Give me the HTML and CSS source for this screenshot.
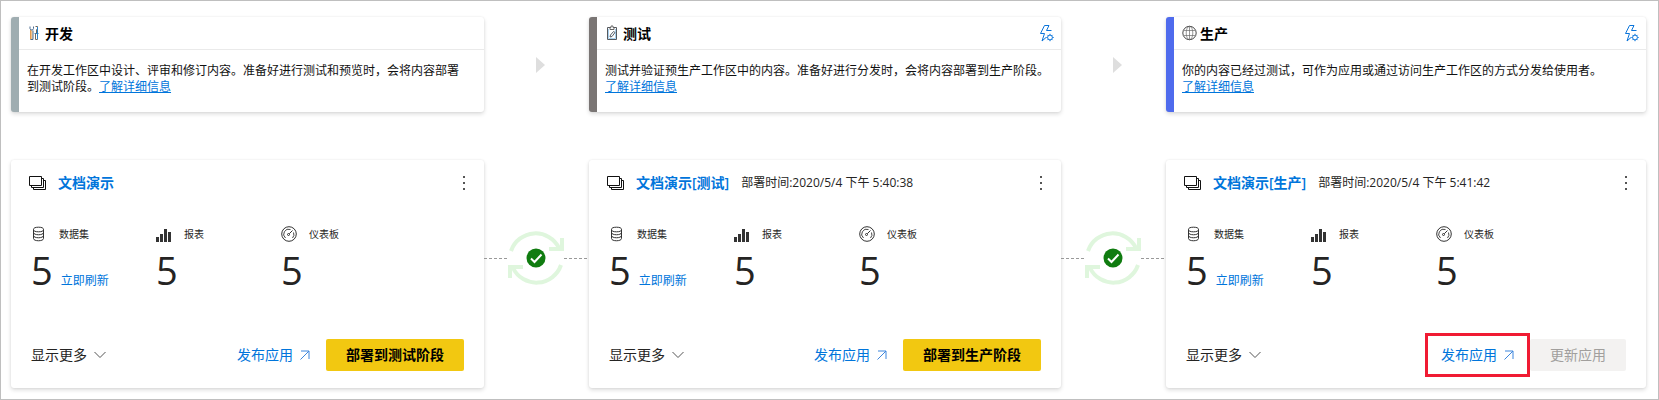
FILE: index.html
```html
<!DOCTYPE html>
<html lang="zh-CN">
<head>
<meta charset="utf-8">
<title>部署管道</title>
<link rel="stylesheet" href="styles.css">
</head>
<body>
<svg class="sprite" aria-hidden="true">
  <symbol id="i-tools" viewBox="0 0 16 16" fill="none">
    <path d="M4.500 5.500V14H6.500V5.500Z" fill="#f2c48f"/>
    <path d="M4.500 5V14.500" stroke="#e39a4e"/>
    <path d="M4 1.500V3.500L5 5H6.500L7.500 3.500V1.500M7 5.500V14.500H4.500" stroke="#4a6a8f"/>
    <path d="M9.500 1.500H11.500V3.500L10.500 5V8" stroke="#6d6357"/>
    <path d="M8.500 8.500H12.500M11.500 2V14.500" stroke="#2b7fc4"/><path d="M9.500 8.500V14.500H11.500" stroke="#77695c"/>
  </symbol>
  <symbol id="i-clip" viewBox="0 0 16 16" fill="none">
    <path d="M6 2.500H3.500V14.500H12.500V2.500H10" stroke="#55595e"/>
    <path d="M4.500 4V13.500H11.500V4" stroke="#a9d0ee"/>
    <path d="M6 4.500V2.500H7V1H9V2.500H10V4.500Z" stroke="#666"/>
    <path d="M6 12L6.500 10L9.500 6.500L11 7.500L8 11.500Z" stroke="#56606b"/>
  </symbol>
  <symbol id="i-globe" viewBox="0 0 16 16" fill="none" stroke="#484848">
    <circle cx="8.500" cy="8" r="6.700"/><g stroke-width=".7" stroke="#6a6a6a"><ellipse cx="8.500" cy="8" rx="3.300" ry="6.700"/><path d="M8.500 1.500V14.500M2.800 5.500H14.200M2.800 10.500H14.200"/></g>
  </symbol>
  <symbol id="i-rule" viewBox="0 0 16 18" fill="none" stroke="#0a74da">
    <path d="M5.500 9.500H1.500L5.500 1.500H10L7.500 6.500H12.500M5.500 9.500L3 17L7 13.500"/>
    <circle cx="11" cy="13.500" r="2.400"/><path d="M11 9.800V11M11 16V17.200M7.300 13.500H8.500M13.500 13.500H14.700M8.400 10.900L9.300 11.800M12.700 15.200L13.600 16.100M13.600 10.900L12.700 11.800M9.300 15.200L8.400 16.100"/>
  </symbol>
  <symbol id="i-stack" viewBox="0 0 17 14" fill="none" stroke="#111">
    <path d="M.5.500H12.500V9.500H.5ZM2.500 9.500V11.500H14.500V2.500H12.500M4.500 11.500V13.500H16.500V4.500H14.500"/>
  </symbol>
  <symbol id="i-data" viewBox="0 0 16 16" fill="none" stroke="#333">
    <ellipse cx="7.500" cy="3.500" rx="5" ry="2.300"/><path d="M2.500 3.500V12.500C2.500 15.500 12.500 15.500 12.500 12.500V3.500M2.500 6.500C2.500 9.500 12.500 9.500 12.500 6.500M2.500 9.500C2.500 12.500 12.500 12.500 12.500 9.500"/>
  </symbol>
  <symbol id="i-report" viewBox="0 0 16 16" fill="#333">
    <path d="M0 11H3V16H0ZM4 8H7V16H4ZM8 3H11V16H8ZM12 6H15V16H12Z"/>
  </symbol>
  <symbol id="i-gauge" viewBox="0 0 16 16" fill="none" stroke="#333">
    <circle cx="8" cy="8" r="7.300"/><path d="M4.500 12A5 5 0 0 1 9.500 3.500M12.500 6.500A5 5 0 0 1 11.500 12" stroke-width=".9"/><circle cx="7.500" cy="8.500" r="1"/><path d="M8.300 7.700L11.500 4.500"/>
  </symbol>
  <symbol id="i-more" viewBox="0 0 4 16" fill="#555"><path d="M1 1H3V3H1ZM1 7H3V9H1ZM1 13H3V15H1Z"/></symbol>
  <symbol id="i-down" viewBox="0 0 12 8" fill="none" stroke="#555"><path d="M.5 1L6 6.500L11.500 1"/></symbol>
  <symbol id="i-out" viewBox="0 0 10 10" fill="none" stroke="#3d86dd"><path d="M.5 9.500L9 1M1 1H9V9"/></symbol>
  <symbol id="i-sync" viewBox="0 0 56 56" fill="none">
    <g stroke="#dff6dd" stroke-width="4"><path d="M3 21A26 26 0 0 1 51 18M54 8V19H41M53 35A26 26 0 0 1 5 38M2 48V37H15"/></g>
    <circle cx="28" cy="28" r="9.500" fill="#107c10"/><path d="M23 28.500L26.500 32L33.500 24.500" stroke="#fff" stroke-width="2"/>
  </symbol>
</svg>
<main class="pipeline">
  <section class="stage-info dev">
    <header class="info-head"><svg class="icon"><use href="#i-tools"/></svg><h2>开发</h2></header>
    <p>在开发工作区中设计、评审和修订内容。准备好进行测试和预览时，会将内容部署到测试阶段。<a href="#">了解详细信息</a></p>
  </section>
  <div class="next"><svg class="triangle" viewBox="0 0 9 16"><path d="M0 0L9 8L0 16Z"/></svg></div>
  <section class="stage-info test">
    <header class="info-head"><svg class="icon"><use href="#i-clip"/></svg><h2>测试</h2><button class="rules" aria-label="部署规则"><svg><use href="#i-rule"/></svg></button></header>
    <p>测试并验证预生产工作区中的内容。准备好进行分发时，会将内容部署到生产阶段。<a href="#">了解详细信息</a></p>
  </section>
  <div class="next"><svg class="triangle" viewBox="0 0 9 16"><path d="M0 0L9 8L0 16Z"/></svg></div>
  <section class="stage-info prod">
    <header class="info-head"><svg class="icon"><use href="#i-globe"/></svg><h2>生产</h2><button class="rules" aria-label="部署规则"><svg><use href="#i-rule"/></svg></button></header>
    <p>你的内容已经过测试，可作为应用或通过访问生产工作区的方式分发给使用者。<br><a href="#">了解详细信息</a></p>
  </section>

  <section class="workspace">
    <header class="ws-head"><svg class="stack"><use href="#i-stack"/></svg><a class="ws-name" href="#">文档演示</a><button class="more" aria-label="更多选项"><svg><use href="#i-more"/></svg></button></header>
    <div class="stats">
      <div class="stat"><div class="label"><svg><use href="#i-data"/></svg><span>数据集</span></div><div class="value"><span class="count">5</span><button class="refresh">立即刷新</button></div></div>
      <div class="stat"><div class="label"><svg><use href="#i-report"/></svg><span>报表</span></div><div class="value"><span class="count">5</span></div></div>
      <div class="stat"><div class="label"><svg><use href="#i-gauge"/></svg><span>仪表板</span></div><div class="value"><span class="count">5</span></div></div>
    </div>
    <footer class="ws-foot"><button class="show">显示更多<svg><use href="#i-down"/></svg></button><a class="publish" href="#">发布应用<svg><use href="#i-out"/></svg></a><button class="deploy">部署到测试阶段</button></footer>
  </section>
  <div class="link"><svg><use href="#i-sync"/></svg></div>
  <section class="workspace">
    <header class="ws-head"><svg class="stack"><use href="#i-stack"/></svg><a class="ws-name" href="#">文档演示[测试]</a><span class="time">部署时间:2020/5/4 下午 5:40:38</span><button class="more" aria-label="更多选项"><svg><use href="#i-more"/></svg></button></header>
    <div class="stats">
      <div class="stat"><div class="label"><svg><use href="#i-data"/></svg><span>数据集</span></div><div class="value"><span class="count">5</span><button class="refresh">立即刷新</button></div></div>
      <div class="stat"><div class="label"><svg><use href="#i-report"/></svg><span>报表</span></div><div class="value"><span class="count">5</span></div></div>
      <div class="stat"><div class="label"><svg><use href="#i-gauge"/></svg><span>仪表板</span></div><div class="value"><span class="count">5</span></div></div>
    </div>
    <footer class="ws-foot"><button class="show">显示更多<svg><use href="#i-down"/></svg></button><a class="publish" href="#">发布应用<svg><use href="#i-out"/></svg></a><button class="deploy">部署到生产阶段</button></footer>
  </section>
  <div class="link"><svg><use href="#i-sync"/></svg></div>
  <section class="workspace">
    <header class="ws-head"><svg class="stack"><use href="#i-stack"/></svg><a class="ws-name" href="#">文档演示[生产]</a><span class="time">部署时间:2020/5/4 下午 5:41:42</span><button class="more" aria-label="更多选项"><svg><use href="#i-more"/></svg></button></header>
    <div class="stats">
      <div class="stat"><div class="label"><svg><use href="#i-data"/></svg><span>数据集</span></div><div class="value"><span class="count">5</span><button class="refresh">立即刷新</button></div></div>
      <div class="stat"><div class="label"><svg><use href="#i-report"/></svg><span>报表</span></div><div class="value"><span class="count">5</span></div></div>
      <div class="stat"><div class="label"><svg><use href="#i-gauge"/></svg><span>仪表板</span></div><div class="value"><span class="count">5</span></div></div>
    </div>
    <footer class="ws-foot"><button class="show">显示更多<svg><use href="#i-down"/></svg></button><a class="publish marked" href="#">发布应用<svg><use href="#i-out"/></svg></a><button class="deploy" disabled>更新应用</button></footer>
  </section>
</main>
</body>
</html>
```
FILE: styles.css
```css
* { box-sizing: border-box; }
body {
  margin: 0;
  min-height: 100vh;
  border: 1px solid #bfbfbf;
  background: #fff;
  color: #252423;
  font: 12px/16px "Open Sans", "Noto Sans CJK SC", sans-serif;
}
.sprite { position: absolute; width: 0; height: 0; }
svg { display: block; flex: none; }
button { margin: 0; padding: 0; border: 0; background: none; color: inherit; font: inherit; }
a { color: #0075db; }

.pipeline {
  display: grid;
  grid-template-columns: 473fr 105px 472fr 105px 480fr;
  row-gap: 48px;
  padding: 16px 12px 10px 10px;
}
.stage-info, .workspace {
  background: #fff;
  border-radius: 3px;
  box-shadow: 0 2px 4px rgba(0, 0, 0, .14), 0 0 2px rgba(0, 0, 0, .08);
}
.stage-info { min-height: 95px; border-left: 8px solid; }
.dev { border-left-color: #9fadb1; }
.test { border-left-color: #7a7574; }
.prod { border-left-color: #4f6bed; }
.info-head {
  display: flex;
  align-items: center;
  gap: 3px;
  height: 33px;
  padding: 0 6px 0 7px;
  border-bottom: 1px solid #eaeaea;
}
.info-head .icon { width: 16px; height: 16px; }
.info-head h2 { margin: 0; padding-top: 2px; color: #000; font-size: 14px; line-height: 20px; font-weight: 700; }
.rules { margin-left: auto; }
.rules svg { width: 16px; height: 18px; }
.stage-info p { margin: 0; padding: 13px 8px; color: #111; }
.dev p { padding-right: 24px; }
.next { display: flex; align-items: center; justify-content: center; padding-left: 8px; }
.triangle { width: 9px; height: 16px; fill: #dedede; }

.workspace { display: flex; flex-direction: column; min-height: 228px; padding: 13px 20px 17px 18px; }
.ws-head { display: flex; align-items: center; height: 20px; }
.stack { width: 17px; height: 14px; margin-right: 12px; }
.ws-name { font-size: 14px; line-height: 20px; font-weight: 600; text-decoration: none; }
.time { margin-left: 12px; }
.more { margin-right: -2px; margin-left: auto; }
.more svg { width: 4px; height: 16px; }
.stats { display: flex; margin-top: 33px; padding-left: 2px; }
.stat { width: 125px; }
.label { display: flex; align-items: center; gap: 12px; height: 16px; font-size: 10px; }
.label svg { width: 16px; height: 16px; }
.value { display: flex; align-items: baseline; gap: 8px; }
.count { font-size: 38px; line-height: 56px; font-weight: 400; }
.refresh { color: #0075db; }
.ws-foot { display: flex; align-items: center; margin-top: auto; padding-left: 2px; font-size: 14px; line-height: 20px; }
.show { display: flex; align-items: center; gap: 7px; }
.show svg { width: 12px; height: 8px; }
.publish { position: relative; display: flex; align-items: center; gap: 7px; margin: 0 16px 0 auto; text-decoration: none; }
.publish svg { width: 10px; height: 10px; }
.marked::after { content: ""; position: absolute; inset: -12px -16px; border: 3px solid #f01b33; }
.deploy { height: 32px; padding: 0 20px; border-radius: 2px; background: #f2c811; color: #000; font-weight: 600; }
.deploy:disabled { background: #f3f2f1; color: #a19f9d; font-weight: 400; }
.link { display: flex; align-items: center; justify-content: space-between; padding: 0 2px 32px 0; }
.link::before, .link::after { content: ""; width: 23px; border-top: 1px dashed #999; }
.link svg { width: 56px; height: 56px; }
```
